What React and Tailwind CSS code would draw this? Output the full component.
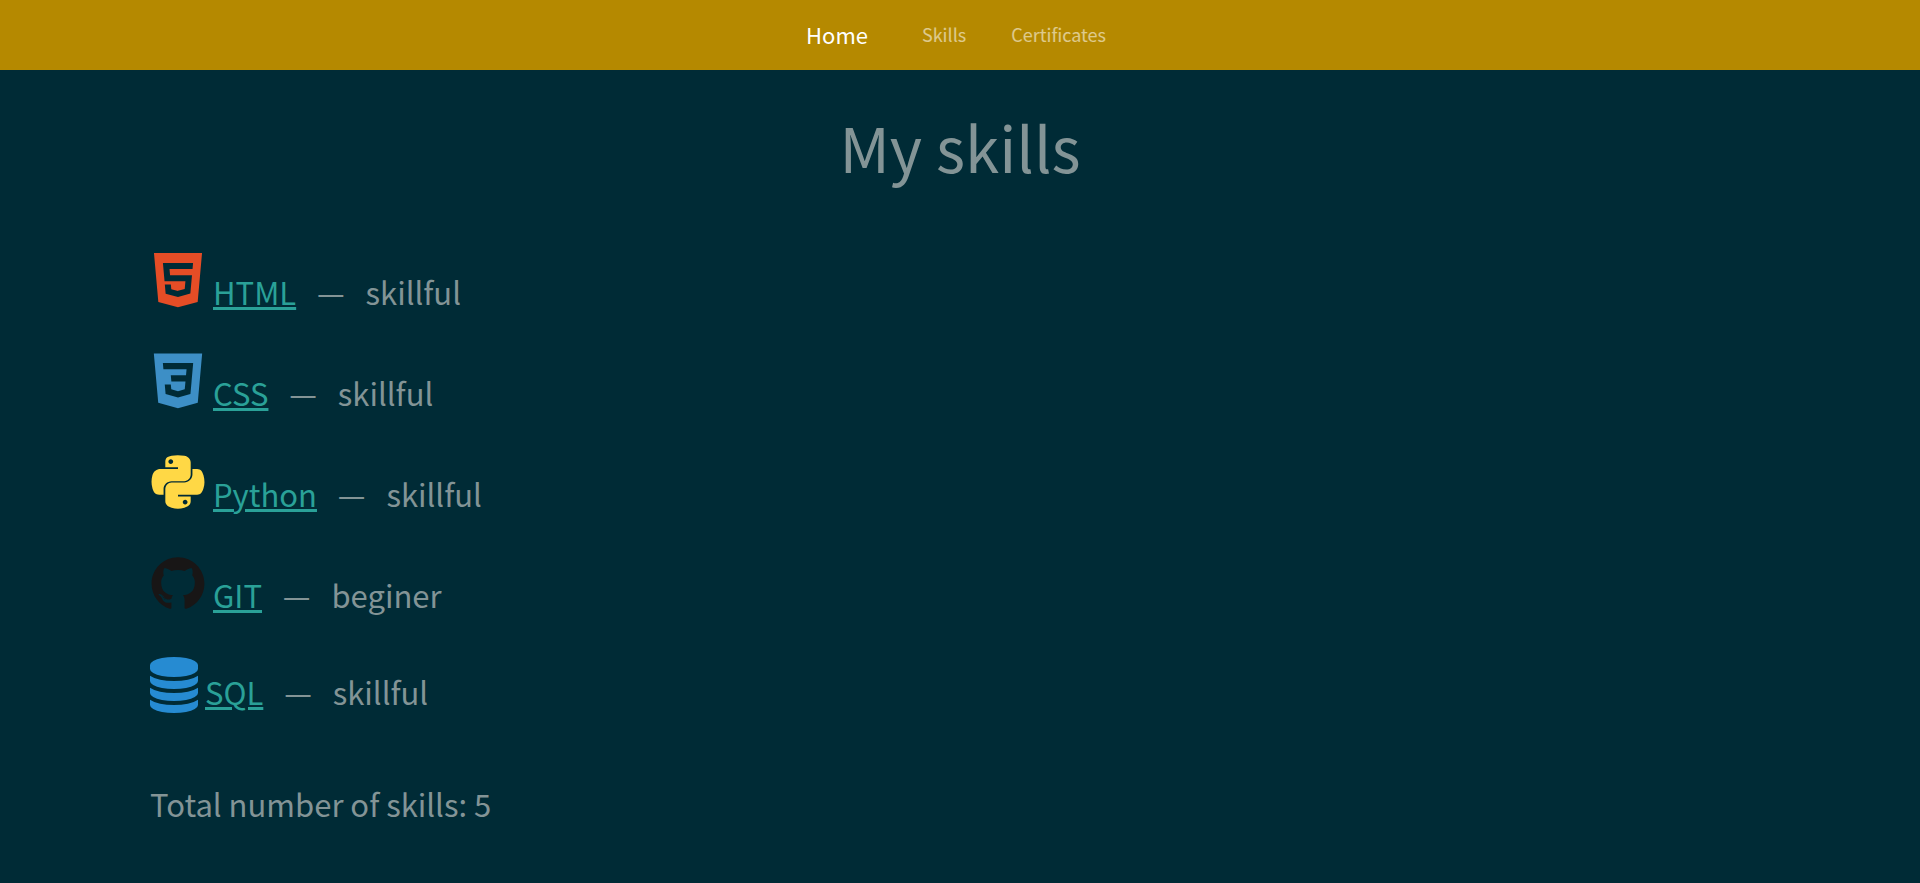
const HtmlIcon = () => (
  <svg viewBox="0 0 128 128" className="mb-[7px] size-14 shrink-0" fill="#e54d26" aria-hidden="true">
    <path d="M9.032 2l10.005 112.093 44.896 12.401 45.02-12.387L118.968 2H9.032zm89.126 26.539l-.627 7.172L97.255 39H44.59l1.257 14h50.156l-.336 3.471-3.233 36.119-.238 2.27L64 102.609v.002l-.034.018-28.177-7.423L33.876 74h13.815l.979 10.919L63.957 89H64v-.546l15.355-3.875L80.959 67H33.261l-3.383-38.117L29.549 25h68.939l-.33 3.539z" />
  </svg>
);

const CssIcon = () => (
  <svg viewBox="0 0 128 128" className="mb-[7px] size-14 shrink-0" fill="#3d8fc6" aria-hidden="true">
    <path d="M8.76 1l10.055 112.883 45.118 12.58 45.244-12.626L119.24 1H8.76zm89.591 25.862l-3.347 37.605.01.203-.014.467v-.004l-2.378 26.294-.262 2.336L64 101.607v.001l-.022.019-28.311-7.888L33.75 72h13.883l.985 11.054 15.386 4.17-.004.008v-.002l15.443-4.229L81.075 65H48.792l-.277-3.043-.631-7.129L47.553 51h34.749l1.264-14H30.64l-.277-3.041-.63-7.131L29.401 23h69.281l-.331 3.862z" />
  </svg>
);

const PythonIcon = () => (
  <svg viewBox="0 0 128 128" className="mb-[7px] size-14 shrink-0" fill="#ffd845" aria-hidden="true">
    <path d="M49.33 62h29.159C86.606 62 93 55.132 93 46.981V19.183c0-7.912-6.632-13.856-14.555-15.176-5.014-.835-10.195-1.215-15.187-1.191-4.99.023-9.612.448-13.805 1.191C37.098 6.188 35 10.758 35 19.183V30h29v4H23.776c-8.484 0-15.914 5.108-18.237 14.811-2.681 11.12-2.8 17.919 0 29.53C7.614 86.983 12.569 93 21.054 93H31V79.952C31 70.315 39.428 62 49.33 62zm-1.838-39.11c-3.026 0-5.478-2.479-5.478-5.545 0-3.079 2.451-5.581 5.478-5.581 3.015 0 5.479 2.502 5.479 5.581-.001 3.066-2.465 5.545-5.479 5.545zm74.789 25.921C120.183 40.363 116.178 34 107.682 34H97v12.981C97 57.031 88.206 65 78.489 65H49.33C41.342 65 35 72.326 35 80.326v27.8c0 7.91 6.745 12.564 14.462 14.834 9.242 2.717 17.994 3.208 29.051 0C85.862 120.831 93 116.549 93 108.126V97H64v-4h43.682c8.484 0 11.647-5.776 14.599-14.66 3.047-9.145 2.916-17.799 0-29.529zm-41.955 55.606c3.027 0 5.479 2.479 5.479 5.547 0 3.076-2.451 5.579-5.479 5.579-3.015 0-5.478-2.502-5.478-5.579 0-3.068 2.463-5.547 5.478-5.547z" />
  </svg>
);

const GithubIcon = () => (
  <svg viewBox="0 0 128 128" className="mb-[7px] size-14 shrink-0" fill="#181616" aria-hidden="true">
    <path d="M64 5.103c-33.347 0-60.388 27.035-60.388 60.388 0 26.682 17.303 49.317 41.297 57.303 3.017.56 4.125-1.31 4.125-2.905 0-1.44-.056-6.197-.082-11.243-16.8 3.653-20.345-7.125-20.345-7.125-2.747-6.98-6.705-8.836-6.705-8.836-5.48-3.748.413-3.67.413-3.67 6.063.425 9.257 6.223 9.257 6.223 5.386 9.23 14.127 6.562 17.573 5.02.542-3.903 2.107-6.568 3.834-8.076-13.413-1.525-27.514-6.704-27.514-29.843 0-6.593 2.36-11.98 6.223-16.21-.628-1.52-2.695-7.662.584-15.98 0 0 5.07-1.623 16.61 6.19C53.7 35 58.867 34.327 64 34.304c5.13.023 10.3.694 15.127 2.033 11.526-7.813 16.59-6.19 16.59-6.19 3.287 8.317 1.22 14.46.593 15.98 3.872 4.23 6.215 9.617 6.215 16.21 0 23.194-14.127 28.3-27.574 29.796 2.167 1.874 4.097 5.55 4.097 11.183 0 8.08-.07 14.583-.07 16.572 0 1.607 1.088 3.49 4.148 2.897 23.98-7.994 41.263-30.622 41.263-57.294C124.388 32.14 97.35 5.104 64 5.104z" />
    <path d="M26.484 91.806c-.133.3-.605.39-1.035.185-.44-.196-.685-.605-.543-.906.13-.31.603-.395 1.04-.188.44.197.69.61.537.91zm2.446 2.729c-.287.267-.85.143-1.232-.28-.396-.42-.47-.983-.177-1.254.298-.266.844-.14 1.24.28.394.426.472.984.17 1.255zM31.312 98.012c-.37.258-.976.017-1.35-.52-.37-.538-.37-1.183.01-1.44.373-.258.97-.025 1.35.507.368.545.368 1.19-.01 1.452zm3.261 3.361c-.33.365-1.036.267-1.552-.23-.527-.487-.674-1.18-.343-1.544.336-.366 1.045-.264 1.564.23.527.486.686 1.18.333 1.543z" />
  </svg>
);

const DatabaseIcon = () => (
  <svg viewBox="0 0 1536 1792" className="mb-0.5 h-14 w-12 shrink-0" fill="#268bd2" aria-hidden="true">
    <path d="M768 768q237 0 443-43t325-127v170q0 69-103 128t-280 93.5-385 34.5-385-34.5-280-93.5-103-128v-170q119 84 325 127t443 43zm0 768q237 0 443-43t325-127v170q0 69-103 128t-280 93.5-385 34.5-385-34.5-280-93.5-103-128v-170q119 84 325 127t443 43zm0-384q237 0 443-43t325-127v170q0 69-103 128t-280 93.5-385 34.5-385-34.5-280-93.5-103-128v-170q119 84 325 127t443 43zm0-1152q208 0 385 34.5t280 93.5 103 128v128q0 69-103 128t-280 93.5-385 34.5-385-34.5-280-93.5-103-128v-128q0-69 103-128t280-93.5 385-34.5z" />
  </svg>
);

const skills = [
  { name: "HTML", level: "skillful", Icon: HtmlIcon },
  { name: "CSS", level: "skillful", Icon: CssIcon },
  { name: "Python", level: "skillful", Icon: PythonIcon },
  { name: "GIT", level: "beginer", Icon: GithubIcon },
  { name: "SQL", level: "skillful", Icon: DatabaseIcon },
];

export default function App() {
  return (
    <div className="min-h-screen bg-[#002b36] font-['Noto_Sans_CJK_JP',sans-serif] text-[#839496]">
      <nav className="flex h-[70px] items-center justify-center bg-[#b58900] pr-2 pb-0.5 text-lg leading-7 text-white/55">
        <a href="#home" className="mr-[54px] text-[22px] text-white">Home</a>
        <a href="#skills" className="mr-[45px]">Skills</a>
        <a href="#certificates">Certificates</a>
      </nav>
      <main className="px-[150px] pb-8 text-[31px] leading-[46px]">
        <h1 className="pt-9 text-center text-[62px] leading-[80px]">My skills</h1>
        <ul className="mt-[66px] flex flex-col gap-[38px]">
          {skills.map(({ name, level, Icon }) => (
            <li key={name} className="flex min-h-[59px] items-end gap-[7px]">
              <Icon />
              <p>
                <a href={`#${name.toLowerCase()}`} className="text-[#2aa198] underline decoration-[3px] underline-offset-2">{name}</a>
                {" \u00a0\u00a0—\u00a0\u00a0 "}
                {level}
              </p>
            </li>
          ))}
        </ul>
        <p className="mt-[66px]">Total number of skills: {skills.length}</p>
      </main>
    </div>
  );
}
